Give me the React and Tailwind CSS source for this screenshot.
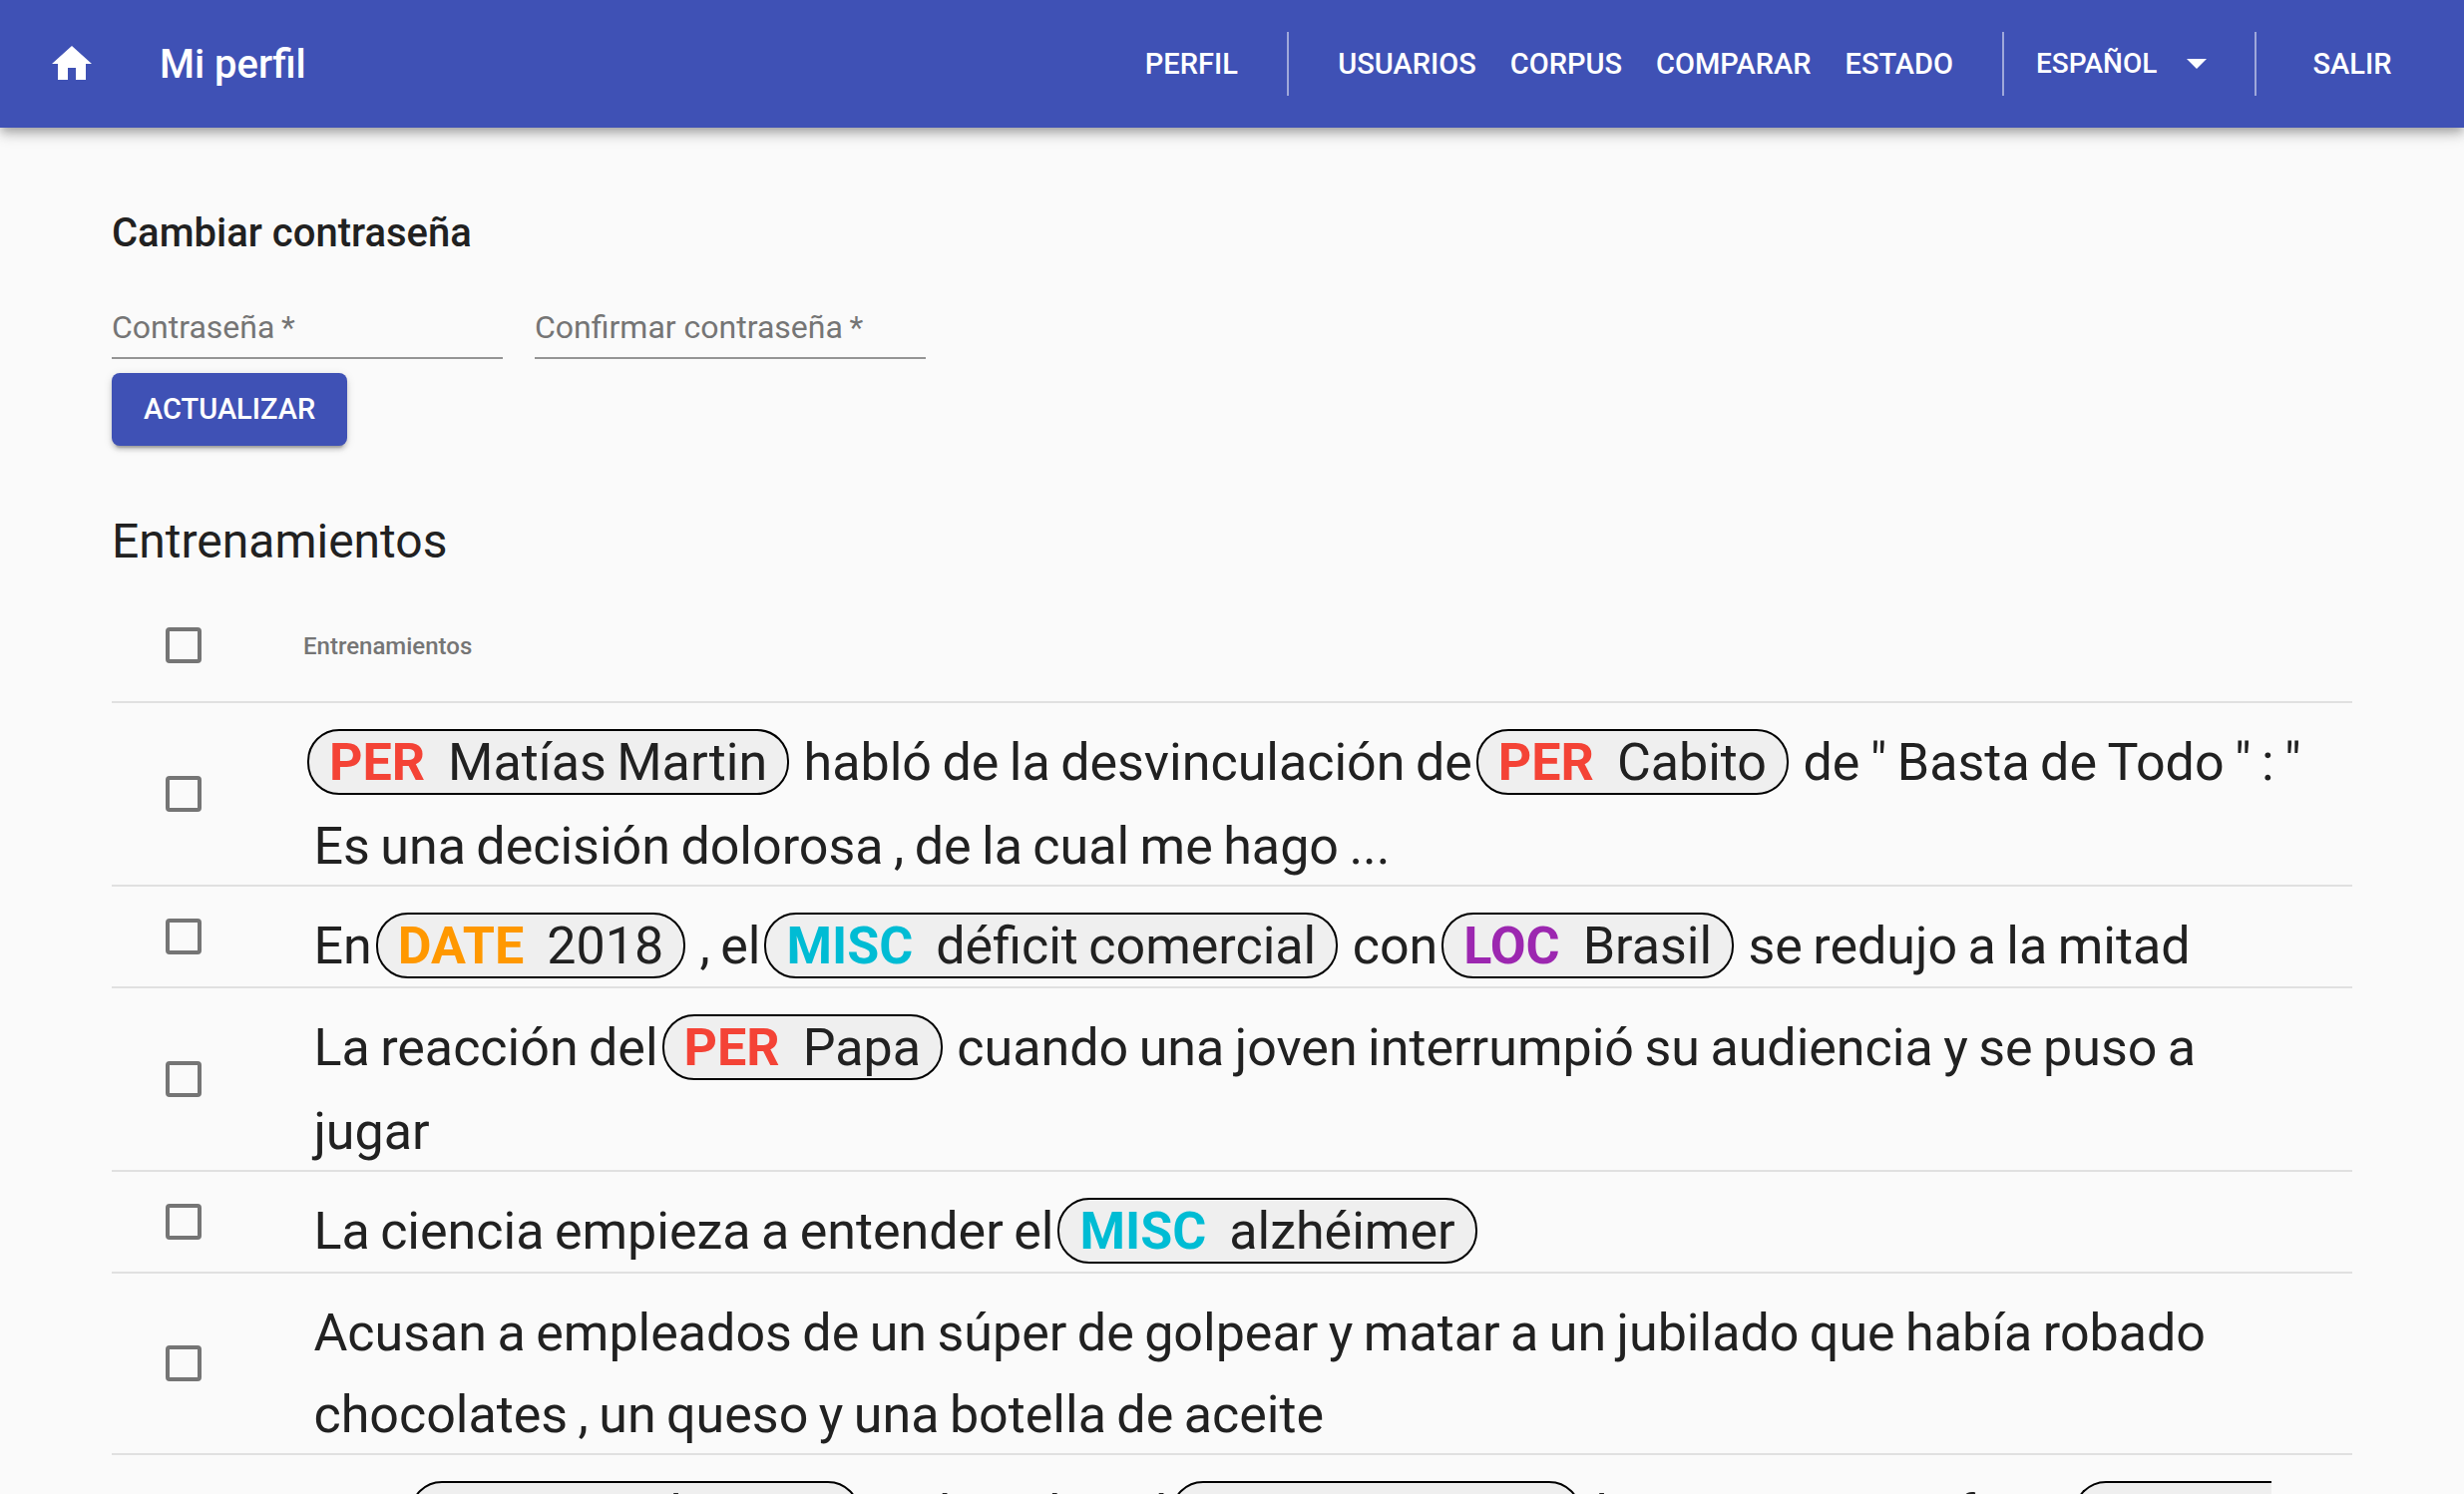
import { Fragment } from "react";

const HOME = "M10 20v-6h4v6h5v-8h3L12 3 2 12h3v8z";

const TAG_COLORS = {
  PER: "text-[#f44336]",
  DATE: "text-[#ff9800]",
  MISC: "text-[#00bcd4]",
  LOC: "text-[#9c27b0]",
};

const ROWS = [
  [
    ["PER", "Matías Martin"],
    "habló de la desvinculación de",
    ["PER", "Cabito"],
    'de " Basta de Todo " : " Es una decisión dolorosa , de la cual me hago ...',
  ],
  ["En", ["DATE", "2018"], ", el", ["MISC", "déficit comercial"], "con", ["LOC", "Brasil"], "se redujo a la mitad"],
  ["La reacción del", ["PER", "Papa"], "cuando una joven interrumpió su audiencia y se puso a jugar"],
  ["La ciencia empieza a entender el", ["MISC", "alzhéimer"]],
  ["Acusan a empleados de un súper de golpear y matar a un jubilado que había robado chocolates , un queso y una botella de aceite"],
  ["Con", ["PER", "Angela Vega"], "se la piden el", ["MISC", "comercio"], "la gran persona fue a", ["LOC", "La Matanza"]],
];

function Word({ children }) {
  return (
    <span className="inline-block pt-[6px] text-[42px] leading-none whitespace-pre">
      {" "}
      <span className="text-[52px] leading-[76px]">{children}</span>
    </span>
  );
}

function Entity({ tag, text }) {
  return (
    <span className="mx-1 rounded-[32px] border-2 border-black bg-[#efefef] px-5 pt-px text-[52px] leading-[80px]">
      <b className={`mr-[23px] font-bold ${TAG_COLORS[tag]}`}>{tag}</b>
      {text.split(" ").map((w, i) => (
        <Fragment key={i}>
          {i > 0 && <span className="text-[42px] leading-none"> </span>}
          {w}
        </Fragment>
      ))}
    </span>
  );
}

function Tick({ label }) {
  return (
    <input
      type="checkbox"
      aria-label={label}
      className="mx-auto block size-9 appearance-none rounded-[4px] border-4 border-[#757575] checked:bg-[#3f51b5]"
    />
  );
}

function NavLink({ children }) {
  return (
    <a href="#" className="min-w-32 px-[17px] py-3 text-center text-[29px] leading-[49px] font-medium uppercase">
      {children}
    </a>
  );
}

function Divider() {
  return <div className="mx-8 h-16 w-[2px] bg-white/50" />;
}

function Field({ id, label }) {
  return (
    <div className="relative w-[392px]">
      <input
        id={id}
        type="password"
        required
        placeholder=" "
        className="peer block h-16 w-full border-b-2 border-[#949494] bg-transparent text-[32px] outline-none"
      />
      <label
        htmlFor={id}
        className="pointer-events-none absolute top-3 left-0 text-[32px] leading-[40px] text-[#757575] peer-focus:hidden"
      >
        {label}
      </label>
    </div>
  );
}

export default function App() {
  return (
    <div className="h-screen overflow-hidden bg-[#fafafa] font-[Roboto,sans-serif] text-[#212121]">
      <header className="flex h-32 items-center bg-[#3f51b5] px-12 text-white shadow-[0_4px_8px_-2px_rgba(0,0,0,0.2),0_8px_10px_0_rgba(0,0,0,0.14),0_2px_20px_0_rgba(0,0,0,0.12)]">
        <a href="#" aria-label="Inicio">
          <svg viewBox="0 0 24 24" className="size-12 fill-current"><path d={HOME} /></svg>
        </a>
        <h1 className="ml-16 grow pt-[2px] text-[40px] leading-[64px] font-medium">Mi perfil</h1>
        <nav className="flex items-center">
          <NavLink>Perfil</NavLink>
          <Divider />
          <NavLink>Usuarios</NavLink>
          <NavLink>Corpus</NavLink>
          <NavLink>Comparar</NavLink>
          <NavLink>Estado</NavLink>
          <Divider />
          <div className="relative">
            <select aria-label="Idioma" className="w-[187px] appearance-none bg-transparent pb-[2px] text-[28px] leading-[49px] font-medium uppercase">
              <option>Español</option>
            </select>
            <svg viewBox="0 0 24 24" className="pointer-events-none absolute top-0 right-[2px] size-12 fill-current"><path d="M7 10l5 5 5-5z" /></svg>
          </div>
          <Divider />
          <NavLink>Salir</NavLink>
        </nav>
      </header>

      <main className="px-28 pt-[74px]">
        <h2 className="text-[40px] leading-[64px] font-medium">Cambiar contraseña</h2>
        <form className="mt-[30px]">
          <div className="flex gap-8">
            <Field id="clave" label={"Contraseña\u2009*"} />
            <Field id="confirmar" label={"Confirmar contraseña\u2009*"} />
          </div>
          <button
            type="button"
            className="mt-[14px] rounded-lg bg-[#3f51b5] px-8 py-3 text-[29px] leading-[49px] font-medium text-white uppercase shadow-[0_6px_2px_-4px_rgba(0,0,0,0.2),0_4px_4px_0_rgba(0,0,0,0.14),0_2px_10px_0_rgba(0,0,0,0.12)]"
          >
            Actualizar
          </button>
        </form>

        <h2 className="mt-16 text-[48px] leading-[64px]">Entrenamientos</h2>
        <table className="mt-4 w-full">
          <thead>
            <tr className="h-[113px] border-b-2 border-[#e0e0e0]">
              <th className="w-36"><Tick label="Seleccionar todo" /></th>
              <th className="px-12 pt-[2px] text-left text-[24px] font-medium text-[#757575]">Entrenamientos</th>
            </tr>
          </thead>
          <tbody>
            {ROWS.map((parts, r) => (
              <tr key={r} className="border-b-2 border-[#e0e0e0]">
                <td className="w-36"><Tick label={`Seleccionar fila ${r + 1}`} /></td>
                <td className="px-12 pt-4 text-[52px] leading-[76px]">
                  {parts.map((part, i) =>
                    Array.isArray(part) ? (
                      <Entity key={i} tag={part[0]} text={part[1]} />
                    ) : (
                      part.split(" ").map((w, j) => <Word key={`${i}-${j}`}>{w}</Word>)
                    )
                  )}
                </td>
              </tr>
            ))}
          </tbody>
        </table>
      </main>
    </div>
  );
}
